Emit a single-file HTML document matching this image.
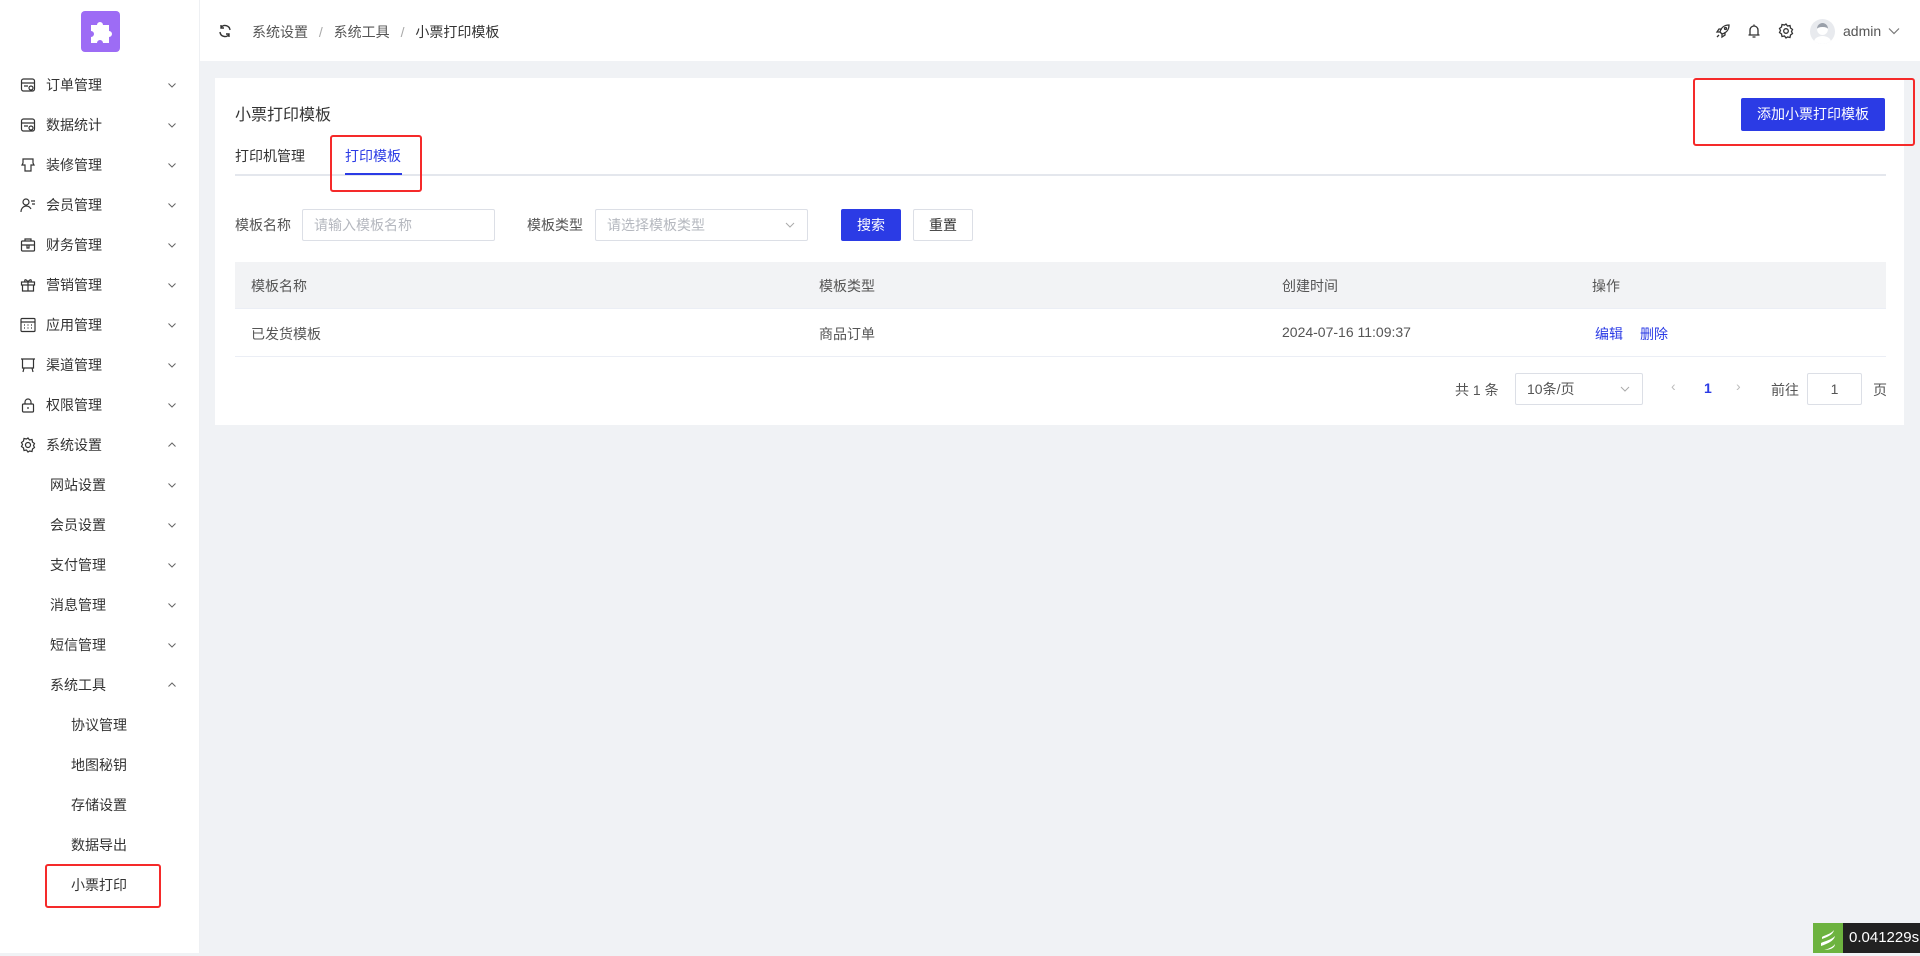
<!DOCTYPE html>
<html><head><meta charset="utf-8"><style>
*{margin:0;padding:0;box-sizing:border-box}
body{width:1920px;height:953px;overflow:hidden;background:#f0f2f5;font-family:"Liberation Sans","Noto Sans CJK SC",sans-serif;font-size:14px;color:#333;position:relative}
.abs{position:absolute}
.side{left:0;top:0;width:200px;height:953px;background:#fff;border-right:1px solid #eef0f3}
.mi{position:absolute;left:0;width:200px;height:40px;line-height:40px;font-size:14px;color:#333}
.mi .ic{position:absolute;left:20px;top:12px;width:16px;height:16px}
.mi .t{position:absolute}
.chev{position:absolute;left:167px;top:15px;width:10px;height:10px}
.top{left:200px;top:0;width:1720px;height:61px;background:#fff}
.card{left:215px;top:78px;width:1689px;height:347px;background:#fff}
.red{position:absolute;border:2px solid #f52a2a;border-radius:3px}
.btn{position:absolute;background:#2b3be5;color:#fff;border-radius:2px;text-align:center;font-size:14px}
.inp{position:absolute;border:1px solid #dcdfe6;border-radius:2px;background:#fff;color:#b5b8bf;font-size:14px;padding-left:11px}
</style></head><body>
<div class="abs side">
 <div class="abs" style="left:81px;top:11px;width:39px;height:41px;background:#9d6cf5;border-radius:4px">
  <svg width="39" height="41" viewBox="0 0 39 41"><path d="M10 14h6a3 3 0 1 1 6 0h6v6a3 3 0 1 1 0 6v6h-6a3 3 0 1 0-6 0h-6v-6a3 3 0 1 0 0-6z" fill="#fff"/></svg>
 </div>
</div>
<div class="mi" style="top:65px"><svg class="ic" viewBox="0 0 16 16" fill="none" stroke="#333" stroke-width="1.2"><rect x="1.5" y="2" width="13" height="12" rx="2"/><path d="M1.5 6h13M4 9h4"/><circle cx="11" cy="11" r="2"/></svg><span class="t" style="left:46px">订单管理</span><svg class="chev" viewBox="0 0 10 10"><path d="M1.5 3.5l3.5 3.5 3.5-3.5" fill="none" stroke="#666"/></svg></div>
<div class="mi" style="top:105px"><svg class="ic" viewBox="0 0 16 16" fill="none" stroke="#333" stroke-width="1.2"><rect x="1.5" y="2" width="13" height="12" rx="2"/><path d="M1.5 6h13M4 9h4"/><circle cx="11" cy="11" r="2"/></svg><span class="t" style="left:46px">数据统计</span><svg class="chev" viewBox="0 0 10 10"><path d="M1.5 3.5l3.5 3.5 3.5-3.5" fill="none" stroke="#666"/></svg></div>
<div class="mi" style="top:145px"><svg class="ic" viewBox="0 0 16 16" fill="none" stroke="#333" stroke-width="1.2"><path d="M3 2h10v4l1 2h-3v6H5V8H2l1-2z"/></svg><span class="t" style="left:46px">装修管理</span><svg class="chev" viewBox="0 0 10 10"><path d="M1.5 3.5l3.5 3.5 3.5-3.5" fill="none" stroke="#666"/></svg></div>
<div class="mi" style="top:185px"><svg class="ic" viewBox="0 0 16 16" fill="none" stroke="#333" stroke-width="1.2"><circle cx="6" cy="5" r="3"/><path d="M1 15c0-4 3-6 5-6s4 1 5 3M11 4h4M12 7h3"/></svg><span class="t" style="left:46px">会员管理</span><svg class="chev" viewBox="0 0 10 10"><path d="M1.5 3.5l3.5 3.5 3.5-3.5" fill="none" stroke="#666"/></svg></div>
<div class="mi" style="top:225px"><svg class="ic" viewBox="0 0 16 16" fill="none" stroke="#333" stroke-width="1.2"><rect x="1.5" y="4" width="13" height="10" rx="1"/><path d="M5 4V2h6v2M1.5 8h13M7 8v3h2V8"/></svg><span class="t" style="left:46px">财务管理</span><svg class="chev" viewBox="0 0 10 10"><path d="M1.5 3.5l3.5 3.5 3.5-3.5" fill="none" stroke="#666"/></svg></div>
<div class="mi" style="top:265px"><svg class="ic" viewBox="0 0 16 16" fill="none" stroke="#333" stroke-width="1.2"><rect x="1.5" y="5" width="13" height="3"/><path d="M2.5 8v6h11V8M8 5v9M8 5C6 2 4 2 5 5M8 5c2-3 4-3 3 0"/></svg><span class="t" style="left:46px">营销管理</span><svg class="chev" viewBox="0 0 10 10"><path d="M1.5 3.5l3.5 3.5 3.5-3.5" fill="none" stroke="#666"/></svg></div>
<div class="mi" style="top:305px"><svg class="ic" viewBox="0 0 16 16" fill="none" stroke="#333" stroke-width="1.2"><rect x="1" y="1.5" width="14" height="13" rx="1"/><path d="M1 5h14M4 8h1M7.5 8h1M11 8h1M4 11h1M7.5 11h1M11 11h1"/></svg><span class="t" style="left:46px">应用管理</span><svg class="chev" viewBox="0 0 10 10"><path d="M1.5 3.5l3.5 3.5 3.5-3.5" fill="none" stroke="#666"/></svg></div>
<div class="mi" style="top:345px"><svg class="ic" viewBox="0 0 16 16" fill="none" stroke="#333" stroke-width="1.2"><path d="M1 2h14M2.5 2v9h11V2M4 11l-1 4M12 11l1 4"/></svg><span class="t" style="left:46px">渠道管理</span><svg class="chev" viewBox="0 0 10 10"><path d="M1.5 3.5l3.5 3.5 3.5-3.5" fill="none" stroke="#666"/></svg></div>
<div class="mi" style="top:385px"><svg class="ic" viewBox="0 0 16 16" fill="none" stroke="#333" stroke-width="1.2"><rect x="2.5" y="7" width="11" height="8" rx="1"/><path d="M5 7V5a3 3 0 0 1 6 0v2M8 10v2"/></svg><span class="t" style="left:46px">权限管理</span><svg class="chev" viewBox="0 0 10 10"><path d="M1.5 3.5l3.5 3.5 3.5-3.5" fill="none" stroke="#666"/></svg></div>
<div class="mi" style="top:425px"><svg class="ic" viewBox="0 0 16 16" fill="none" stroke="#333" stroke-width="1.2"><circle cx="8" cy="8" r="2.5"/><path d="M8 1l1.5 2 2.5-.5.5 2.5 2 1.5-1 2 1 2-2 1.5-.5 2.5-2.5-.5L8 15l-1.5-2-2.5.5-.5-2.5-2-1.5 1-2-1-2 2-1.5.5-2.5 2.5.5z"/></svg><span class="t" style="left:46px">系统设置</span><svg class="chev" viewBox="0 0 10 10"><path d="M1.5 6.5l3.5-3.5 3.5 3.5" fill="none" stroke="#666"/></svg></div>
<div class="mi" style="top:465px"><span class="t" style="left:50px">网站设置</span><svg class="chev" viewBox="0 0 10 10"><path d="M1.5 3.5l3.5 3.5 3.5-3.5" fill="none" stroke="#666"/></svg></div>
<div class="mi" style="top:505px"><span class="t" style="left:50px">会员设置</span><svg class="chev" viewBox="0 0 10 10"><path d="M1.5 3.5l3.5 3.5 3.5-3.5" fill="none" stroke="#666"/></svg></div>
<div class="mi" style="top:545px"><span class="t" style="left:50px">支付管理</span><svg class="chev" viewBox="0 0 10 10"><path d="M1.5 3.5l3.5 3.5 3.5-3.5" fill="none" stroke="#666"/></svg></div>
<div class="mi" style="top:585px"><span class="t" style="left:50px">消息管理</span><svg class="chev" viewBox="0 0 10 10"><path d="M1.5 3.5l3.5 3.5 3.5-3.5" fill="none" stroke="#666"/></svg></div>
<div class="mi" style="top:625px"><span class="t" style="left:50px">短信管理</span><svg class="chev" viewBox="0 0 10 10"><path d="M1.5 3.5l3.5 3.5 3.5-3.5" fill="none" stroke="#666"/></svg></div>
<div class="mi" style="top:665px"><span class="t" style="left:50px">系统工具</span><svg class="chev" viewBox="0 0 10 10"><path d="M1.5 6.5l3.5-3.5 3.5 3.5" fill="none" stroke="#666"/></svg></div>
<div class="mi" style="top:705px"><span class="t" style="left:71px">协议管理</span></div>
<div class="mi" style="top:745px"><span class="t" style="left:71px">地图秘钥</span></div>
<div class="mi" style="top:785px"><span class="t" style="left:71px">存储设置</span></div>
<div class="mi" style="top:825px"><span class="t" style="left:71px">数据导出</span></div>
<div class="mi" style="top:865px"><span class="t" style="left:71px">小票打印</span></div>
<div class="red" style="left:45px;top:864px;width:116px;height:44px"></div>

<div class="abs top">
 <svg class="abs" style="left:18px;top:24px" width="14" height="14" viewBox="0 0 14 14" fill="none" stroke="#333" stroke-width="1.4"><path d="M12 6A5 5 0 0 0 3 3.5M2 8a5 5 0 0 0 9 2.5M3 1v3h3M11 13v-3H8"/></svg>
 <div class="abs" style="left:52px;top:22px;font-size:14px;color:#555;white-space:nowrap">系统设置 <span style="color:#aaa;margin:0 7px">/</span> 系统工具 <span style="color:#aaa;margin:0 7px">/</span> <span style="color:#333">小票打印模板</span></div>
 <svg class="abs" style="left:1515px;top:23px" width="16" height="16" viewBox="0 0 16 16" fill="none" stroke="#333" stroke-width="1.3"><path d="M14 2c-5 0-8 3-9 7l2 2c4-1 7-4 7-9zM5 9l-3 0 2-3h3M7 11v3l3-2V9M4 12l-2 2"/><circle cx="10.5" cy="5.5" r="1"/></svg>
 <svg class="abs" style="left:1546px;top:23px" width="16" height="16" viewBox="0 0 16 16" fill="none" stroke="#333" stroke-width="1.3"><path d="M4 12V7a4 4 0 0 1 8 0v5M2.5 12h11M8 1.5v1.5M6.5 14h3"/></svg>
 <svg class="abs" style="left:1578px;top:23px" width="16" height="16" viewBox="0 0 16 16" fill="none" stroke="#333" stroke-width="1.3"><circle cx="8" cy="8" r="2.3"/><path d="M8 1l1.5 2 2.5-.5.5 2.5 2 1.5-1 2 1 2-2 1.5-.5 2.5-2.5-.5L8 15l-1.5-2-2.5.5-.5-2.5-2-1.5 1-2-1-2 2-1.5.5-2.5 2.5.5z"/></svg>
 <div class="abs" style="left:1610px;top:19px;width:25px;height:25px;border-radius:50%;background:#e8eaee;overflow:hidden"><div class="abs" style="left:7px;top:4px;width:11px;height:12px;border-radius:50%;background:#fff;border-top:4px solid #9aa0aa"></div><div class="abs" style="left:4px;top:17px;width:17px;height:12px;border-radius:50%;background:#fff"></div></div>
 <div class="abs" style="left:1643px;top:23px;font-size:14px;color:#555">admin</div>
 <svg class="abs" style="left:1688px;top:27px" width="12" height="8" viewBox="0 0 12 8"><path d="M1 1.5l5 5 5-5" fill="none" stroke="#777" stroke-width="1.2"/></svg>
</div>

<div class="abs card">
 <div class="abs" style="left:20px;top:23px;font-size:16px;color:#333">小票打印模板</div>
 <div class="abs" style="left:20px;top:68px;font-size:14px;color:#333">打印机管理</div>
 <div class="abs" style="left:130px;top:68px;font-size:14px;color:#2b3be5">打印模板</div>
 <div class="abs" style="left:20px;top:96px;width:1651px;height:2px;background:#e4e7ed"></div>
 <div class="abs" style="left:130px;top:95px;width:57px;height:2px;background:#2b3be5"></div>
 <div class="red" style="left:115px;top:57px;width:92px;height:57px"></div>
 <div class="btn" style="left:1526px;top:20px;width:144px;height:33px;line-height:33px">添加小票打印模板</div>
 <div class="red" style="left:1478px;top:0;width:222px;height:68px"></div>

 <div class="abs" style="left:20px;top:137px;color:#555">模板名称</div>
 <div class="inp" style="left:87px;top:131px;width:193px;height:32px;line-height:30px">请输入模板名称</div>
 <div class="abs" style="left:312px;top:137px;color:#555">模板类型</div>
 <div class="inp" style="left:380px;top:131px;width:213px;height:32px;line-height:30px">请选择模板类型<svg class="abs" style="right:12px;top:12px" width="10" height="7" viewBox="0 0 10 7"><path d="M1 1l4 4 4-4" fill="none" stroke="#aaa"/></svg></div>
 <div class="btn" style="left:626px;top:131px;width:60px;height:32px;line-height:32px">搜索</div>
 <div class="abs" style="left:698px;top:131px;width:60px;height:32px;line-height:30px;border:1px solid #dcdfe6;border-radius:2px;text-align:center;color:#333">重置</div>

 <div class="abs" style="left:20px;top:184px;width:1651px;height:47px;background:#f2f3f5;border-bottom:1px solid #ebeef5"></div>
 <div class="abs" style="left:36px;top:198px;color:#555">模板名称</div>
 <div class="abs" style="left:604px;top:198px;color:#555">模板类型</div>
 <div class="abs" style="left:1067px;top:198px;color:#555">创建时间</div>
 <div class="abs" style="left:1377px;top:198px;color:#555">操作</div>
 <div class="abs" style="left:20px;top:278px;width:1651px;height:1px;background:#ebeef5"></div>
 <div class="abs" style="left:36px;top:246px;color:#555">已发货模板</div>
 <div class="abs" style="left:604px;top:246px;color:#555">商品订单</div>
 <div class="abs" style="left:1067px;top:246px;color:#555">2024-07-16 11:09:37</div>
 <div class="abs" style="left:1380px;top:246px;color:#2b3be5">编辑</div>
 <div class="abs" style="left:1425px;top:246px;color:#2b3be5">删除</div>

 <div class="abs" style="left:1240px;top:302px;color:#555">共 1 条</div>
 <div class="inp" style="left:1300px;top:295px;width:128px;height:32px;line-height:30px;color:#555">10条/页<svg class="abs" style="right:12px;top:12px" width="10" height="7" viewBox="0 0 10 7"><path d="M1 1l4 4 4-4" fill="none" stroke="#aaa"/></svg></div>
 <div class="abs" style="left:1456px;top:300px;color:#bbb">‹</div>
 <div class="abs" style="left:1489px;top:302px;color:#2b3be5;font-weight:bold">1</div>
 <div class="abs" style="left:1521px;top:300px;color:#bbb">›</div>
 <div class="abs" style="left:1556px;top:302px;color:#555">前往</div>
 <div class="inp" style="left:1592px;top:295px;width:55px;height:32px;line-height:30px;color:#555;padding:0;text-align:center">1</div>
 <div class="abs" style="left:1658px;top:302px;color:#555">页</div>
</div>

<div class="abs" style="left:1813px;top:923px;width:30px;height:30px;background:#6db33f">
 <svg width="30" height="30" viewBox="0 0 30 30" fill="#fff"><path d="M8 20c4-2 10-3 14-7-1 5-8 8-14 10zM9 14c3-2 9-3 12-7-1 5-7 7-12 9zM11 27c4-1 9-3 11-6 0 4-5 6-11 6z"/></svg>
</div>
<div class="abs" style="left:1843px;top:923px;width:77px;height:30px;background:#222;color:#fff;font-size:15px;line-height:30px;padding-left:6px">0.041229s</div>
</body></html>
